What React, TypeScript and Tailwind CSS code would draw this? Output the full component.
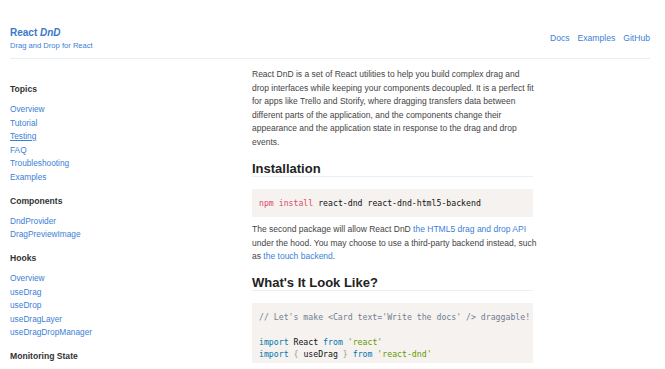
const topics = ["Overview", "Tutorial", "Testing", "FAQ", "Troubleshooting", "Examples"];
const components = ["DndProvider", "DragPreviewImage"];
const hooks = ["Overview", "useDrag", "useDrop", "useDragLayer", "useDragDropManager"];

function NavGroup({ title, items, first }: { title: string; items: string[]; first?: boolean }) {
  return (
    <div className={first ? "" : "mt-[10.5px]"}>
      <h3 className="text-[8.6px] leading-[13.5px] font-bold text-[#333] mb-[6.5px]">{title}</h3>
      <ul>
        {items.map((item, i) => (
          <li key={i} className="text-[8.3px] leading-[13.5px]">
            <a className={"text-[#3b7fd6] " + (item === "Testing" ? "underline" : "")}>{item}</a>
          </li>
        ))}
      </ul>
    </div>
  );
}

function App() {
  return (
    <div className="w-[665px] h-[369px] overflow-hidden bg-white font-['Liberation_Sans',Arial,sans-serif] text-[#444]">
      {/* Header */}
      <header className="ml-[10px] w-[640px] flex justify-between items-start pt-[27px] pb-[7px] border-b border-[#e6eef8]">
        <div>
          <div className="text-[10px] leading-[12px] font-bold text-[#3a78c9]">
            React <em>DnD</em>
          </div>
          <div className="mt-[1px] text-[7.6px] leading-[11px] text-[#3b7fd6]">Drag and Drop for React</div>
        </div>
        <nav className="pt-[5px] flex gap-[8px] text-[8.6px] leading-[12px] text-[#3b7fd6]">
          <a>Docs</a>
          <a>Examples</a>
          <a>GitHub</a>
        </nav>
      </header>

      <div className="flex ml-[10px]">
        {/* Sidebar */}
        <aside className="w-[242px] shrink-0 pt-[24px]">
          <NavGroup title="Topics" items={topics} first />
          <NavGroup title="Components" items={components} />
          <NavGroup title="Hooks" items={hooks} />
          <NavGroup title="Monitoring State" items={[]} />
        </aside>

        {/* Main content */}
        <main className="w-[281px] pt-[9px]">
          <p className="text-[8.5px] leading-[13.6px] w-[283px]">
            React DnD is a set of React utilities to help you build complex drag and drop interfaces while keeping
            your components decoupled. It is a perfect fit for apps like Trello and Storify, where dragging transfers
            data between different parts of the application, and the components change their appearance and the
            application state in response to the drag and drop events.
          </p>

          <h2 className="mt-[12.5px] text-[13px] leading-[14px] font-bold text-[#222] border-b border-[#eee]">Installation</h2>

          <pre className="mt-[12px] bg-[#f5f2f0] px-[7px] py-[8px] font-['DejaVu_Sans_Mono',monospace] text-[8.2px] leading-[12px] text-[#111]">
            <span className="text-[#dd4a68]">npm install</span> react-dnd react-dnd-html5-backend
          </pre>

          <p className="mt-[6px] text-[8.5px] leading-[13.6px] w-[290px]">
            The second package will allow React DnD <a className="text-[#3b7fd6]">the HTML5 drag and drop API</a> under
            the hood. You may choose to use a third-party backend instead, such as{" "}
            <a className="text-[#3b7fd6]">the touch backend</a>.
          </p>

          <h2 className="mt-[12px] text-[13px] leading-[14px] font-bold text-[#222] border-b border-[#eee]">
            What's It Look Like?
          </h2>

          <pre className="mt-[12px] bg-[#f5f2f0] pl-[7px] pt-[8px] pb-[2px] overflow-hidden font-['DejaVu_Sans_Mono',monospace] text-[8.2px] leading-[12.5px] text-[#111]">
            <span className="text-[#708090]">{"// Let's make <Card text='Write the docs' /> draggable!"}</span>
            {"\n\n"}
            <span className="text-[#0077aa]">import</span> React <span className="text-[#0077aa]">from</span>{" "}
            <span className="text-[#669900]">'react'</span>
            {"\n"}
            <span className="text-[#0077aa]">import</span> <span className="text-[#999]">{"{"}</span> useDrag{" "}
            <span className="text-[#999]">{"}"}</span> <span className="text-[#0077aa]">from</span>{" "}
            <span className="text-[#669900]">'react-dnd'</span>
          </pre>
        </main>
      </div>
    </div>
  );
}

export default App;
